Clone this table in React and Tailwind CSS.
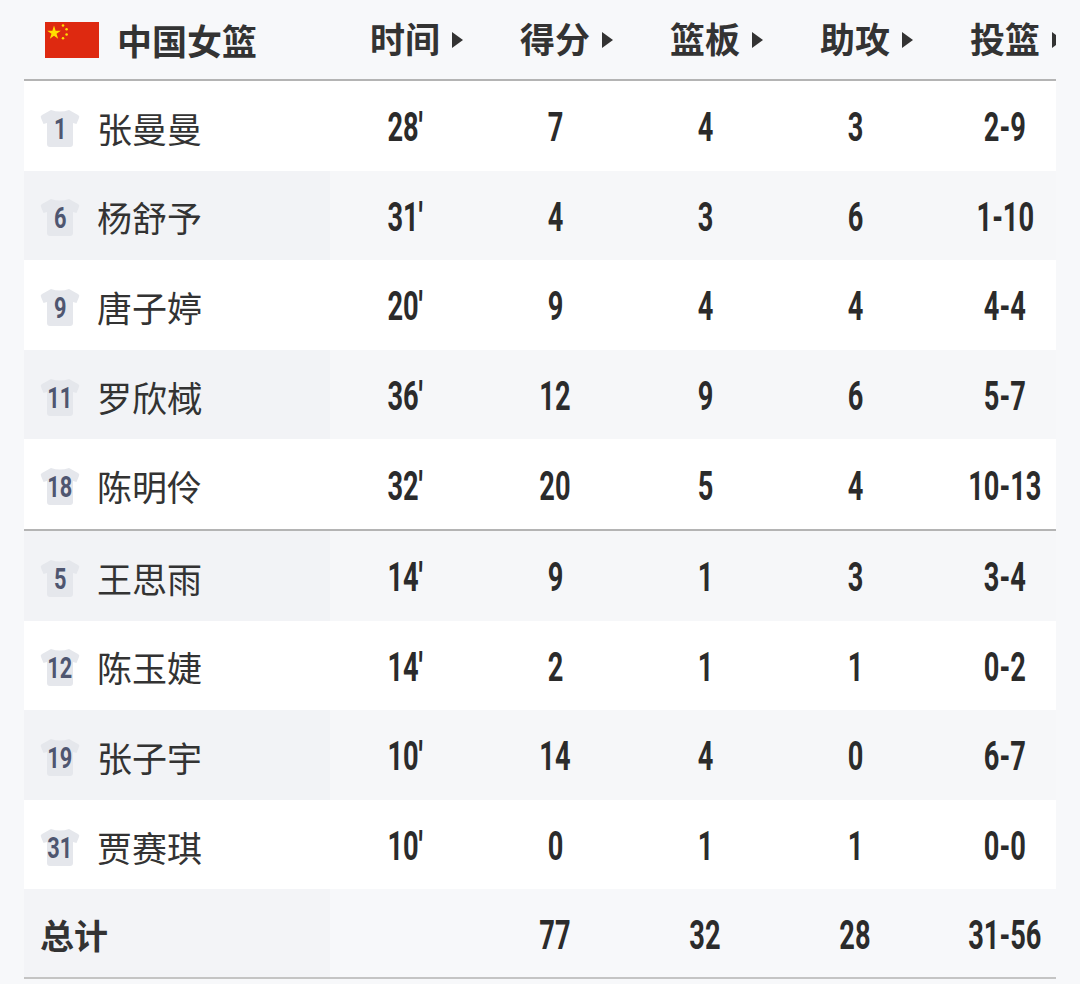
import React from "react"

const players = [
    { no: "1", name: "张曼曼", min: "28′", pts: "7", reb: "4", ast: "3", fg: "2-9" },
    { no: "6", name: "杨舒予", min: "31′", pts: "4", reb: "3", ast: "6", fg: "1-10" },
    { no: "9", name: "唐子婷", min: "20′", pts: "9", reb: "4", ast: "4", fg: "4-4" },
    { no: "11", name: "罗欣棫", min: "36′", pts: "12", reb: "9", ast: "6", fg: "5-7" },
    { no: "18", name: "陈明伶", min: "32′", pts: "20", reb: "5", ast: "4", fg: "10-13" },
]

const bench = [
    { no: "5", name: "王思雨", min: "14′", pts: "9", reb: "1", ast: "3", fg: "3-4" },
    { no: "12", name: "陈玉婕", min: "14′", pts: "2", reb: "1", ast: "1", fg: "0-2" },
    { no: "19", name: "张子宇", min: "10′", pts: "14", reb: "4", ast: "0", fg: "6-7" },
    { no: "31", name: "贾赛琪", min: "10′", pts: "0", reb: "1", ast: "1", fg: "0-0" },
]

const cjk = "font-['Noto_Sans_CJK_SC',sans-serif]"
const num = "inline-block scale-x-[0.68] font-['Roboto',sans-serif] font-bold text-[40px] leading-none text-[#2b2b2b] mt-[5px]"

function Flag() {
    return (
        <svg width="54" height="36" viewBox="0 0 30 20">
            <rect width="30" height="20" fill="#de2910" />
            <polygon points="5,2 5.9,4.8 8.8,4.8 6.4,6.5 7.3,9.3 5,7.6 2.7,9.3 3.6,6.5 1.2,4.8 4.1,4.8" fill="#ffde00" />
            <circle cx="10" cy="2" r="0.7" fill="#ffde00" />
            <circle cx="12" cy="4" r="0.7" fill="#ffde00" />
            <circle cx="12" cy="7" r="0.7" fill="#ffde00" />
            <circle cx="10" cy="9" r="0.7" fill="#ffde00" />
        </svg>
    )
}

function Jersey({ no }) {
    return (
        <div className="relative w-[40px] h-[38px] flex items-center justify-center mt-[4px]">
            <svg className="absolute inset-0" width="40" height="38" viewBox="0 0 40 38">
                <path
                    d="M11 1 Q20 4 29 1 L38 6 Q40 7 39 9 L36.5 15 L33 14 V35 Q33 38 30 38 H10 Q7 38 7 35 V14 L3.5 15 L1 9 Q0 7 2 6 Z"
                    fill="#e5e7ec"
                />
            </svg>
            <span className="relative inline-block scale-x-[0.75] font-['Roboto',sans-serif] font-bold text-[29px] leading-none text-[#4f5670] mt-[3px]">
                {no}
            </span>
        </div>
    )
}

function HeadCell({ label }) {
    return (
        <div className="flex items-center justify-center">
            <div className="relative">
                <span className={`${cjk} font-bold text-[35px] leading-none text-[#333]`}>{label}</span>
                <span className="absolute left-full top-1/2 -translate-y-1/2 ml-[12px] w-0 h-0 border-y-[8px] border-y-transparent border-l-[11px] border-l-[#333]" />
            </div>
        </div>
    )
}

function Row({ p, shaded }) {
    return (
        <div className={`grid grid-cols-[306px_repeat(5,150px)] h-[89.6px] ${shaded ? "bg-[#f6f7f9]" : "bg-white"}`}>
            <div className={`flex items-center pl-[16px] gap-[17px] ${shaded ? "bg-[#f2f3f6]" : ""}`}>
                <Jersey no={p.no} />
                <span className={`${cjk} text-[35px] leading-none text-[#333] mt-[3px]`}>{p.name}</span>
            </div>
            {[p.min, p.pts, p.reb, p.ast, p.fg].map((v, i) => (
                <div key={i} className="flex items-center justify-center">
                    <span className={num}>{v}</span>
                </div>
            ))}
        </div>
    )
}

export default function App() {
    return (
        <div className="w-[1080px] h-[984px] bg-[#f7f8fa] overflow-hidden">
            <div className="ml-[24px] w-[1032px] overflow-hidden">
                <div className="w-[1056px]">
                    <div className="grid grid-cols-[306px_repeat(5,150px)] h-[81px] border-b-2 border-[#b4b4b4]">
                        <div className="flex items-center pl-[21px] gap-[18px]">
                            <Flag />
                            <span className={`${cjk} font-bold text-[35px] leading-none text-[#333]`}>中国女篮</span>
                        </div>
                        {["时间", "得分", "篮板", "助攻", "投篮"].map((h) => (
                            <HeadCell key={h} label={h} />
                        ))}
                    </div>

                    {players.map((p, i) => (
                        <Row key={p.no} p={p} shaded={i % 2 === 1} />
                    ))}
                    <div className="h-[2px] bg-[#b4b4b4]" />
                    {bench.map((p, i) => (
                        <Row key={p.no} p={p} shaded={i % 2 === 0} />
                    ))}

                    <div className="grid grid-cols-[306px_repeat(5,150px)] h-[89.6px] bg-[#f7f8fa] border-b-2 border-[#c4c4c4]">
                        <div className="flex items-center pl-[16px] bg-[#f3f4f7]">
                            <span className={`${cjk} font-bold text-[34px] leading-none text-[#333] mt-[3px]`}>总计</span>
                        </div>
                        {["", "77", "32", "28", "31-56"].map((v, i) => (
                            <div key={i} className="flex items-center justify-center">
                                <span className={num}>{v}</span>
                            </div>
                        ))}
                    </div>
                </div>
            </div>
        </div>
    )
}
